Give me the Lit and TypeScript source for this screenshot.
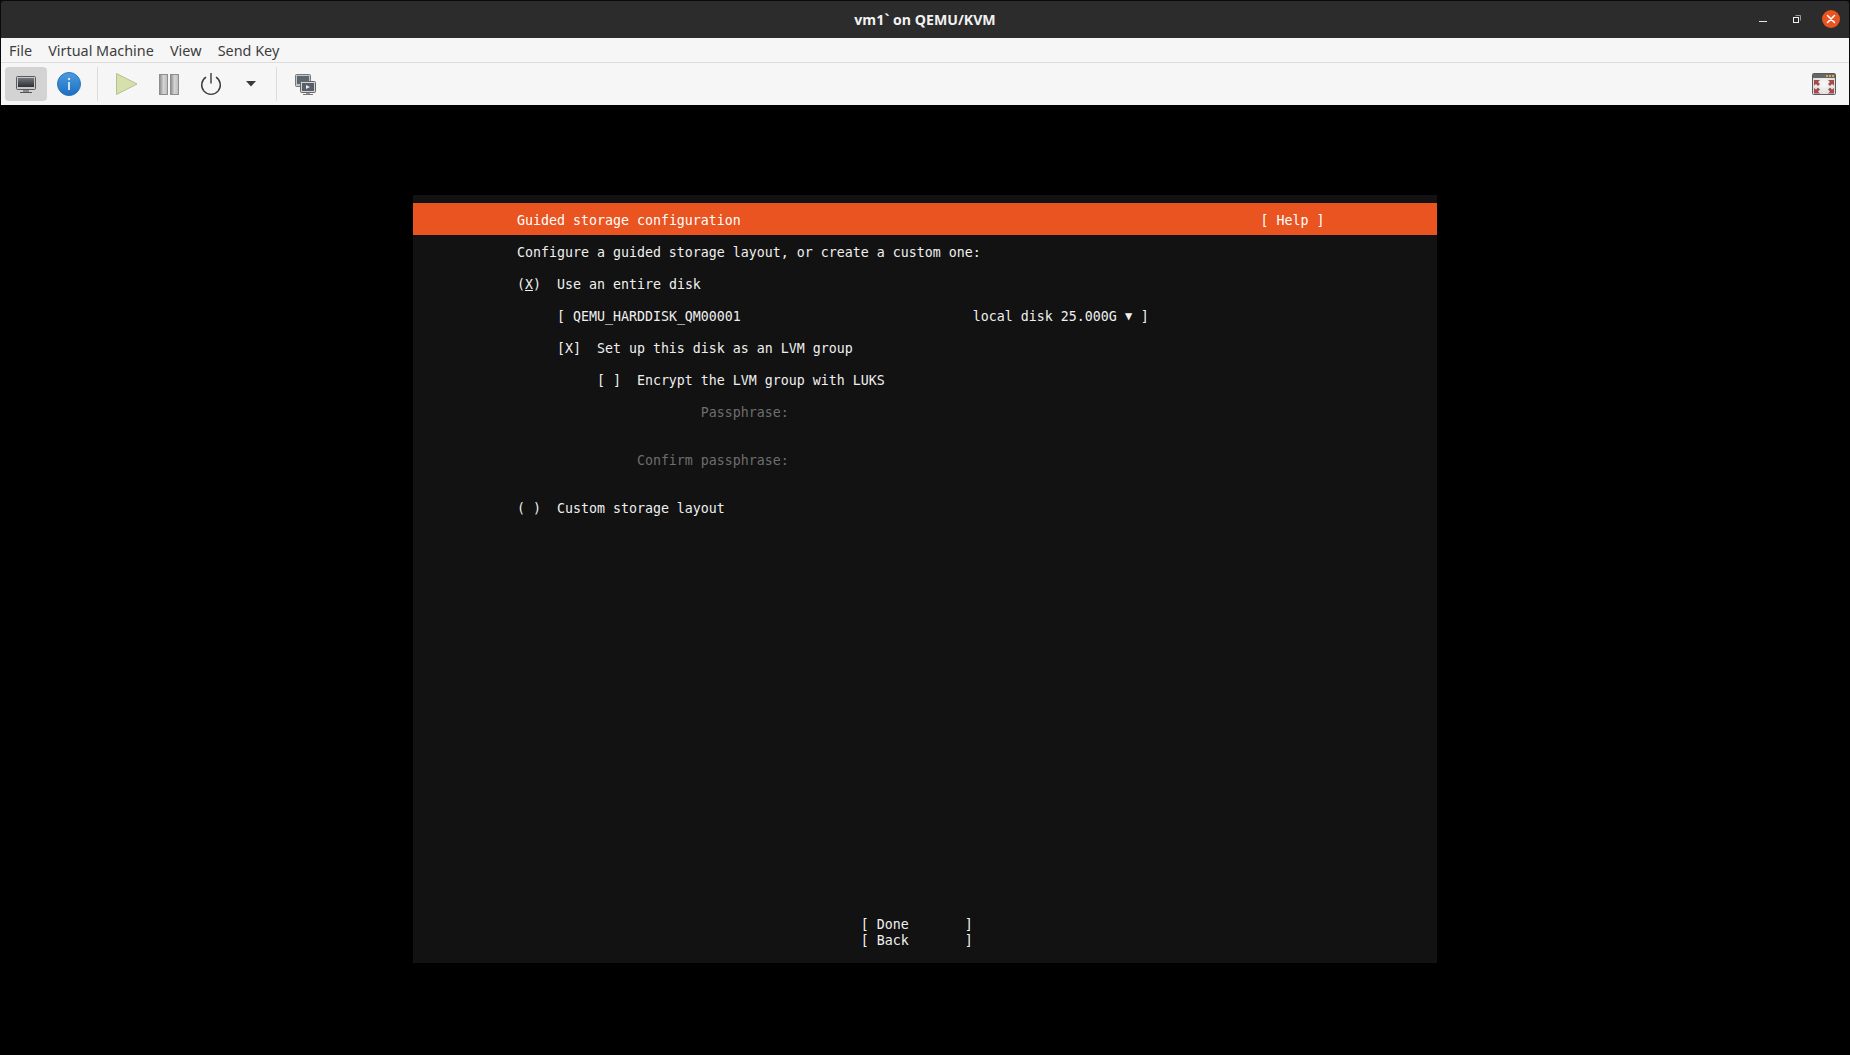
import { LitElement, html, css, svg } from "lit";
import { customElement } from "lit/decorators.js";

const X = html`<span class="ul">X</span>`;
const GAP = (n: number) => " ".repeat(n);

@customElement("app-root")
export class AppRoot extends LitElement {
  static styles = css`
    :host { display: block; width: 1850px; height: 1055px; background: #000; overflow: hidden; }
    .win { display: flex; flex-direction: column; height: 105px; padding: 1px 1px 0; box-sizing: border-box; background: #0a0a0a; }
    .title { height: 37px; flex: none; background: #2c2c2c; display: grid; grid-template-columns: 1fr auto 1fr; align-items: center; border-radius: 3px 3px 0 0; }
    .title .t { grid-column: 2; font: 700 14.13px "Open Sans", "Noto Sans", sans-serif; color: #f2f2f2; }
    .ctl { grid-column: 3; justify-self: end; display: flex; align-items: center; }
    .ctl svg { display: block; }
    .menu { height: 25px; flex: none; background: #f6f6f6; border-bottom: 1px solid #dcdcdc; box-sizing: border-box; display: flex; align-items: center; padding-left: 8px; gap: 16.2px; font: 400 14.4px "Noto Sans", "Open Sans", sans-serif; color: #3d3d3d; }
    .tools { height: 42px; flex: none; background: #f6f6f6; display: flex; align-items: center; padding-left: 4px; }
    .tools svg { display: block; flex: none; }
    .btn { width: 42px; height: 34px; border-radius: 4px; background: #d3d3d3; display: flex; align-items: center; justify-content: center; flex: none; }
    .sep { width: 1px; height: 34px; background: #dcdcdc; flex: none; }
    .s1 { margin-left: 15px; }
    .s2 { margin-left: 20px; }
    .spring { flex: 1; }
    .endpad { width: 13px; flex: none; }
    .stage { display: flex; justify-content: center; padding-top: 90px; }
    .term { width: 1024px; height: 768px; box-sizing: border-box; padding-top: 8px; background: #121212; color: #f0f0f0; font: 400 13.29px/20px "DejaVu Sans Mono", monospace; }
    .head { height: 32px; line-height: 36px; background: #e95420; color: #fff; margin-bottom: 8px; white-space: pre; }
    .row { height: 16px; white-space: pre; }
    .dim { color: #6e6e6e; }
    .ul { text-decoration: underline; }
    .tri { display: inline-block; width: 8px; text-align: center; font-size: 12px; line-height: 16px; vertical-align: top; position: relative; top: 1px; }
  `;

  private icon(w: number, h: number, body: unknown, ml = 0) {
    return html`<svg width=${w} height=${h} viewBox="0 0 ${w} ${h}" style=${ml ? `margin-left:${ml}px` : ""}>${body}</svg>`;
  }

  render() {
    const rows: unknown[] = [
      `${GAP(13)}Configure a guided storage layout, or create a custom one:`,
      "",
      html`${GAP(13)}(${X})  Use an entire disk`,
      "",
      html`${GAP(18)}[ QEMU_HARDDISK_QM00001${GAP(29)}local disk 25.000G <span class="tri">▼</span> ]`,
      "",
      `${GAP(18)}[X]  Set up this disk as an LVM group`,
      "",
      `${GAP(23)}[ ]  Encrypt the LVM group with LUKS`,
      "",
      html`<span class="dim">${GAP(36)}Passphrase:</span>`,
      "",
      "",
      html`<span class="dim">${GAP(28)}Confirm passphrase:</span>`,
      "",
      "",
      `${GAP(13)}( )  Custom storage layout`,
    ];
    for (let i = 0; i < 25; i++) rows.push("");
    rows.push(`${GAP(56)}[ Done${GAP(7)}]`);
    rows.push(`${GAP(56)}[ Back${GAP(7)}]`);

    return html`
      <div class="win">
        <div class="title">
          <div class="t">vm1\` on QEMU/KVM</div>
          <div class="ctl">
            ${this.icon(100, 37, svg`
              <rect x="10" y="20" width="8" height="1" fill="#e6e6e6"/>
              <rect x="44.5" y="16.5" width="5" height="5" fill="none" stroke="#f0f0f0"/>
              <path d="M46.5 14.5h5v5" fill="none" stroke="#9a9a9a"/>
              <circle cx="82" cy="18" r="9" fill="#e95420"/>
              <path d="M78.5 14.5l7 7M85.5 14.5l-7 7" stroke="#fff" stroke-width="1.6" stroke-linecap="round"/>
            `)}
          </div>
        </div>
        <div class="menu"><span>File</span><span>Virtual Machine</span><span>View</span><span>Send Key</span></div>
        <div class="tools">
          <div class="btn">
            ${this.icon(24, 20, svg`
              <defs><linearGradient id="scr" x1="0" y1="0" x2="0" y2="1"><stop offset="0" stop-color="#70767c"/><stop offset="1" stop-color="#2c3034"/></linearGradient></defs>
              <rect x="2.5" y="2.5" width="19" height="13" rx="1" fill="#c8c8c8" stroke="#5a5a5a"/>
              <rect x="4" y="4" width="16" height="9" fill="url(#scr)"/>
              <rect x="9" y="16" width="6" height="2" fill="#8a8a8a"/>
              <rect x="6" y="18" width="12" height="1" fill="#555"/>
            `)}
          </div>
          ${this.icon(26, 26, svg`
            <defs><linearGradient id="inf" x1="0" y1="0" x2="0" y2="1"><stop offset="0" stop-color="#4a9be0"/><stop offset="1" stop-color="#1c6fc0"/></linearGradient></defs>
            <circle cx="13" cy="13" r="11.5" fill="url(#inf)" stroke="#2a76bd"/>
            <circle cx="13" cy="8" r="1.2" fill="#cfe3f6"/>
            <rect x="12" y="11" width="2" height="8" fill="#cfe3f6"/>
          `, 9)}
          <div class="sep s1"></div>
          ${this.icon(24, 24, svg`
            <path d="M1.5 1.5L22 12 1.5 22.5z" fill="#d6e0ad" stroke="#b5c08a"/>
          `, 17)}
          ${this.icon(22, 23, svg`
            <defs><linearGradient id="pz" x1="0" y1="0" x2="1" y2="0"><stop offset="0" stop-color="#8a8a8a"/><stop offset=".5" stop-color="#d4d4d4"/><stop offset="1" stop-color="#bbb"/></linearGradient></defs>
            <rect x="1.5" y="1.5" width="8" height="20" fill="url(#pz)" stroke="#8d8d8d"/>
            <rect x="12.5" y="1.5" width="8" height="20" fill="url(#pz)" stroke="#8d8d8d"/>
          `, 19)}
          ${this.icon(24, 24, svg`
            <path d="M7 5.2A9.3 9.3 0 1 0 17 5.2" fill="none" stroke="#3a3a3a" stroke-width="1.4"/>
            <path d="M12 1v10.5" stroke="#3a3a3a" stroke-width="1.4"/>
          `, 19)}
          ${this.icon(10, 6, svg`<path d="M0 0h10L5 5.5z" fill="#3a3a3a"/>`, 23)}
          <div class="sep s2"></div>
          ${this.icon(23, 23, svg`
            <rect x="2.5" y="1.5" width="15" height="12" rx="1" fill="#c4c4c4" stroke="#777"/>
            <rect x="4" y="3" width="12" height="8" fill="#5c666e"/>
            <rect x="7.5" y="8.5" width="15" height="11" rx="1" fill="#d4d4d4" stroke="#666"/>
            <rect x="9" y="10" width="12" height="8" fill="#56606a"/>
            <path d="M13 12l4 2-4 2z" fill="#eee"/>
            <rect x="13" y="20" width="4" height="1" fill="#999"/>
            <rect x="10" y="21" width="10" height="1" fill="#777"/>
          `, 16)}
          <div class="spring"></div>
          ${this.icon(24, 22, svg`
            <defs><radialGradient id="fs"><stop offset="0" stop-color="#fafafa"/><stop offset="1" stop-color="#dedede"/></radialGradient></defs>
            <rect x=".5" y=".5" width="23" height="21" rx="1" fill="url(#fs)" stroke="#5a5a5a"/>
            <rect x="1" y="1" width="22" height="4" fill="#666"/>
            <rect x="14" y="2" width="2" height="2" fill="#d9a850"/><rect x="17" y="2" width="2" height="2" fill="#d9a850"/><rect x="20" y="2" width="2" height="2" fill="#d9a850"/>
            <path d="M2 7h6l-2 2 2 2-2 2-2-2-2 1.5zM22 7h-6l2 2-2 2 2 2 2-2 2 1.5zM2 20.500h6l-2-2 2-2-2-2-2 2-2-1.500zM22 20.500h-6l2-2-2-2 2-2 2 2 2-1.500z" fill="#a84a4a"/>
          `)}
          <div class="endpad"></div>
        </div>
      </div>
      <div class="stage">
        <div class="term">
          <div class="head">${GAP(13)}Guided storage configuration${GAP(65)}[ Help ]</div>
          ${rows.map((r) => html`<div class="row">${r}</div>`)}
        </div>
      </div>
    `;
  }
}
